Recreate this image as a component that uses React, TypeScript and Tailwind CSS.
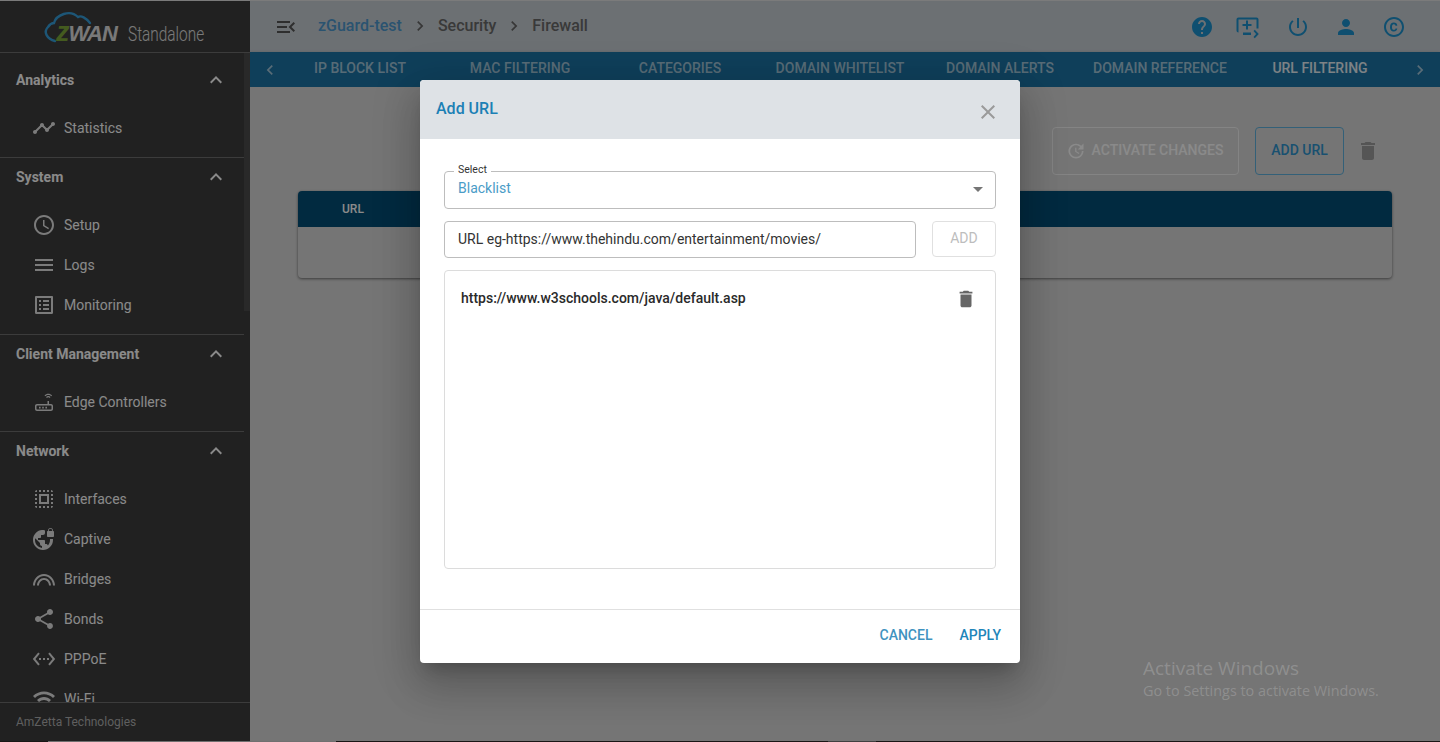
import React from 'react';

// material style icon paths, all on a 24 box
const P = {
  timeline: "M23 8c0 1.1-.9 2-2 2-.18 0-.35-.02-.51-.07l-3.56 3.55c.05.16.07.34.07.52 0 1.1-.9 2-2 2s-2-.9-2-2c0-.18.02-.36.07-.52l-2.55-2.55c-.16.05-.34.07-.52.07s-.36-.02-.52-.07l-4.55 4.56c.05.16.07.33.07.51 0 1.1-.9 2-2 2s-2-.9-2-2 .9-2 2-2c.18 0 .35.02.51.07l4.56-4.55C8.02 9.36 8 9.18 8 9c0-1.1.9-2 2-2s2 .9 2 2c0 .18-.02.36-.07.52l2.55 2.55c.16-.05.34-.07.52-.07s.36.02.52.07l3.55-3.56C19.02 8.35 19 8.18 19 8c0-1.1.9-2 2-2s2 .9 2 2z",
  clock: "M11.99 2C6.47 2 2 6.48 2 12s4.47 10 9.99 10C17.52 22 22 17.52 22 12S17.52 2 11.99 2zM12 20c-4.42 0-8-3.58-8-8s3.58-8 8-8 8 3.58 8 8-3.58 8-8 8zm.5-13H11v6l5.25 3.15.75-1.23-4.5-2.67z",
  menu: "M3 18h18v-2H3v2zm0-5h18v-2H3v2zm0-7v2h18V6H3z",
  listAlt: "M19 5v14H5V5h14m1.1-2H3.9c-.5 0-.9.4-.9.9v16.2c0 .4.4.9.9.9h16.2c.4 0 .9-.5.9-.9V3.9c0-.5-.5-.9-.9-.9zM11 7h6v2h-6V7zm0 4h6v2h-6v-2zm0 4h6v2h-6zM7 7h2v2H7zm0 4h2v2H7zm0 4h2v2H7z",
  selectAll: "M3 5h2V3c-1.1 0-2 .9-2 2zm0 8h2v-2H3v2zm4 8h2v-2H7v2zM3 9h2V7H3v2zm10-6h-2v2h2V3zm6 0v2h2c0-1.1-.9-2-2-2zM5 21v-2H3c0 1.1.9 2 2 2zm-2-4h2v-2H3v2zM9 3H7v2h2V3zm2 18h2v-2h-2v2zm8-8h2v-2h-2v2zm0 8c1.1 0 2-.9 2-2h-2v2zm0-12h2V7h-2v2zm0 8h2v-2h-2v2zm-4 4h2v-2h-2v2zm0-16h2V3h-2v2zM7 17h10V7H7v10zm2-8h6v6H9V9z",
  vpnLock: "M21 4v-.5C21 2.12 19.88 1 18.5 1S16 2.12 16 3.5V4c-.55 0-1 .45-1 1v4c0 .55.45 1 1 1h5c.55 0 1-.45 1-1V5c0-.55-.45-1-1-1zm-.8 0h-3.4v-.5c0-.94.76-1.7 1.7-1.7s1.7.76 1.7 1.7V4zm-2.28 8c.04.33.08.66.08 1 0 2.08-.8 3.97-2.1 5.39-.26-.81-1-1.39-1.9-1.39h-1v-3c0-.55-.45-1-1-1H6v-2h2c.55 0 1-.45 1-1V8h2c1.1 0 2-.9 2-2V3.46c-.95-.3-1.95-.46-3-.46C5.48 3 1 7.48 1 13s4.48 10 10 10 10-4.48 10-10c0-.34-.02-.67-.05-1h-2.03zM10 20.93c-3.95-.49-7-3.85-7-7.93 0-.62.08-1.21.21-1.79L8 16v1c0 1.1.9 2 2 2v1.93z",
  share: "M18 16.08c-.76 0-1.44.3-1.96.77L8.91 12.7c.05-.23.09-.46.09-.7s-.04-.47-.09-.7l7.05-4.11c.54.5 1.25.81 2.04.81 1.66 0 3-1.34 3-3s-1.34-3-3-3-3 1.34-3 3c0 .24.04.47.09.7L8.04 9.81C7.5 9.31 6.79 9 6 9c-1.66 0-3 1.34-3 3s1.34 3 3 3c.79 0 1.5-.31 2.04-.81l7.12 4.16c-.05.21-.08.43-.08.65 0 1.61 1.31 2.92 2.92 2.92 1.61 0 2.92-1.31 2.92-2.92s-1.31-2.92-2.92-2.92z",
  ethernet: "M7.77 6.76L6.23 5.48.82 12l5.41 6.52 1.54-1.28L3.42 12l4.35-5.24zM7 13h2v-2H7v2zm10-2h-2v2h2v-2zm-6 2h2v-2h-2v2zm6.77-7.52l-1.54 1.28L20.58 12l-4.35 5.24 1.54 1.28L23.18 12l-5.41-6.52z",
  wifi: "M1 9l2 2c4.97-4.97 13.03-4.97 18 0l2-2C16.93 2.93 7.08 2.93 1 9zm8 8l3 3 3-3c-1.65-1.66-4.34-1.66-6 0zm-4-4l2 2c2.76-2.76 7.24-2.76 10 0l2-2C15.14 9.14 8.87 9.14 5 13z",
  router: "M19 14h-2v-3h-1.5v3H5c-1.1 0-2 .9-2 2v3c0 1.1.9 2 2 2h14c1.1 0 2-.9 2-2v-3c0-1.1-.9-2-2-2zm.5 5c0 .3-.2.5-.5.5H5c-.3 0-.5-.2-.5-.5v-3c0-.3.2-.5.5-.5h14c.3 0 .5.2.5.5v3zM7 16.8h1.6v1.6H7zm3.2 0h1.6v1.6h-1.6zm3.2 0H15v1.6h-1.6zM12.5 5.4l.8.8c.9-.9 2-1.3 3-1.3s2.2.4 3 1.3l.8-.8C19 4.3 17.6 3.7 16.3 3.7s-2.7.6-3.8 1.7zm1.6 1.7l.8.8c.4-.4.9-.6 1.4-.6s1 .2 1.4.6l.8-.8c-.6-.6-1.4-1-2.2-1s-1.6.4-2.2 1z",
  bridge: "M1 18.5C1 12.4 5.9 7 12 7s11 5.4 11 11.5h-2C21 13.5 17 9 12 9S3 13.5 3 18.5H1zm4 0C5 14.6 8.1 11 12 11s7 3.6 7 7.5h-2c0-2.8-2.2-5.5-5-5.5s-5 2.7-5 5.5H5z",
  chevronUp: "M12 8l-6 6 1.41 1.41L12 10.83l4.59 4.58L18 14z",
  chevronLeft: "M15.41 7.41L14 6l-6 6 6 6 1.41-1.41L10.83 12z",
  chevronRight: "M10 6L8.59 7.41 13.17 12l-4.58 4.59L10 18l6-6z",
  menuOpen: "M3 18h13v-2H3v2zm0-5h10v-2H3v2zm0-7v2h13V6H3zm18 9.59L17.42 12 21 8.41 19.59 7l-5 5 5 5L21 15.59z",
  help: "M12 2C6.48 2 2 6.48 2 12s4.48 10 10 10 10-4.48 10-10S17.52 2 12 2zm1 17h-2v-2h2v2zm2.07-7.75l-.9.92C13.45 12.9 13 13.5 13 15h-2v-.5c0-1.1.45-2.1 1.17-2.83l1.24-1.26c.37-.36.59-.86.59-1.41 0-1.1-.9-2-2-2s-2 .9-2 2H8c0-2.21 1.79-4 4-4s4 1.79 4 4c0 .88-.36 1.68-.93 2.25z",
  queue: "M20.5 2.5h-18C1.4 2.5.5 3.4.5 4.5v11c0 1.1.9 2 2 2H7V20h8v-2.5H2.5v-13h18v9h2v-9c0-1.1-.9-2-2-2zM15.5 9v2H12v3.5h-2V11H6.5V9H10V5.5h2V9h3.5zM18.8 14.8l-1.3 1.3 2.6 2.9-2.6 2.9 1.3 1.3 4-4.2z",
  power: "M13 3h-2v10h2V3zm4.83 2.17l-1.42 1.42C17.99 7.86 19 9.81 19 12c0 3.87-3.13 7-7 7s-7-3.13-7-7c0-2.19 1.01-4.14 2.58-5.42L6.17 5.17C4.23 6.82 3 9.26 3 12c0 4.97 4.03 9 9 9s9-4.03 9-9c0-2.74-1.23-5.18-3.17-6.83z",
  person: "M12 12c2.21 0 4-1.79 4-4s-1.79-4-4-4-4 1.79-4 4 1.79 4 4 4zm0 2c-2.67 0-8 1.34-8 4v2h16v-2c0-2.66-5.33-4-8-4z",
  copyright: "M11.88 9.14c1.28.06 1.61 1.15 1.63 1.66h1.79c-.08-1.98-1.49-3.19-3.45-3.19C9.64 7.61 8 9 8 12.14c0 1.94.93 4.24 3.84 4.24 2.22 0 3.41-1.65 3.44-2.95h-1.79c-.03.59-.45 1.38-1.63 1.44-1.32-.04-1.86-1.07-1.86-2.73 0-2.87 1.27-2.98 1.88-3zM12 2C6.48 2 2 6.48 2 12s4.48 10 10 10 10-4.48 10-10S17.52 2 12 2zm0 18c-4.41 0-8-3.59-8-8s3.59-8 8-8 8 3.59 8 8-3.59 8-8 8z",
  trash: "M6 19c0 1.1.9 2 2 2h8c1.1 0 2-.9 2-2V7H6v12zM19 4h-3.5l-1-1h-5l-1 1H5v2h14V4z",
  close: "M19 6.41L17.59 5 12 10.59 6.41 5 5 6.41 10.59 12 5 17.59 6.41 19 12 13.41 17.59 19 19 17.59 13.41 12z",
  update: "M21 10.12h-6.78l2.74-2.82c-2.73-2.7-7.15-2.8-9.88-.1-2.73 2.71-2.73 7.08 0 9.79s7.15 2.71 9.88 0C18.32 15.65 19 14.08 19 12.1h2c0 1.98-.88 4.55-2.64 6.29-3.51 3.48-9.21 3.48-12.72 0-3.5-3.47-3.53-9.11-.02-12.58s9.14-3.47 12.65 0L21 3v7.12zM12.5 8v4.25l3.5 2.08-.72 1.21L11 13V8h1.5z",
};

function Icon({ d, className }: { d: string; className?: string }) {
  return (
    <svg viewBox="0 0 24 24" fill="currentColor" className={className}>
      <path d={d} />
    </svg>
  );
}

const sections = [
  { title: 'Analytics', items: [{ label: 'Statistics', icon: P.timeline }] },
  {
    title: 'System',
    items: [
      { label: 'Setup', icon: P.clock },
      { label: 'Logs', icon: P.menu },
      { label: 'Monitoring', icon: P.listAlt },
    ],
  },
  { title: 'Client Management', items: [{ label: 'Edge Controllers', icon: P.router }] },
  {
    title: 'Network',
    items: [
      { label: 'Interfaces', icon: P.selectAll },
      { label: 'Captive', icon: P.vpnLock },
      { label: 'Bridges', icon: P.bridge },
      { label: 'Bonds', icon: P.share },
      { label: 'PPPoE', icon: P.ethernet },
      { label: 'Wi-Fi', icon: P.wifi },
    ],
  },
];

const tabs = ['IP BLOCK LIST', 'MAC FILTERING', 'CATEGORIES', 'DOMAIN WHITELIST', 'DOMAIN ALERTS', 'DOMAIN REFERENCE', 'URL FILTERING'];

function Logo() {
  return (
    <div className="relative h-[52px] shrink-0 border-b border-[#6f6f6f]">
      <svg viewBox="0 0 250 51" className="absolute left-0 top-0 h-[51px] w-[250px]" fill="none">
        <path d="M55 40C47 38 43 31 48 26C50 23 52 22 54 22C56 14 70 8 78 16C81 14 86 17 90 22" stroke="#36a0dc" strokeWidth="2.4" strokeLinecap="round" />
      </svg>
      <div className="absolute left-[56px] top-[16px] whitespace-nowrap font-['Liberation_Sans',sans-serif] text-[22px] leading-[30px] font-bold italic tracking-[-1px] text-[#e0e0e0]">
        <span className="text-[27px] text-[#7fa83a]">z</span>WAN
      </div>
      <div className="absolute left-[128px] top-[20px] origin-left scale-x-[.77] whitespace-nowrap text-[20px] leading-[26px] font-light text-[#e0e0e0]">
        Standalone
      </div>
    </div>
  );
}

function Sidebar() {
  return (
    <aside className="flex h-full w-[250px] shrink-0 flex-col bg-[#3d3d3d] text-white">
      <Logo />
      <div className="relative min-h-0 flex-1 overflow-hidden">
        <div className="absolute right-0 top-0 h-[258px] w-[6px] bg-[#4c4c4c]" />
        {sections.map((s, i) => (
          <div key={s.title} className={`mr-[6px] pb-[9px] ${i === 0 ? 'pt-[8px]' : ''} border-b border-[#6f6f6f]`}>
            <div className="flex h-[38px] items-center justify-between pl-[16px] pr-[16px] text-[14px] font-bold">
              <span>{s.title}</span>
              <Icon d={P.chevronUp} className="h-[24px] w-[24px]" />
            </div>
            <div className="pt-[9px]">
              {s.items.map((it) => (
                <div key={it.label} className="flex h-[40px] items-center pl-[32px] text-[14px]">
                  <Icon d={it.icon} className="mr-[8px] h-[24px] w-[24px] text-[#e4e4e4]" />
                  <span>{it.label}</span>
                </div>
              ))}
            </div>
          </div>
        ))}
      </div>
      <div className="flex h-[39px] shrink-0 items-center border-t border-[#6f6f6f] bg-[#3d3d3d] pl-[16px] text-[12px] text-[#b0b0b0]">
        AmZetta Technologies
      </div>
    </aside>
  );
}

function TopBar() {
  return (
    <header className="flex h-[51px] shrink-0 items-center bg-[#c8cfd5] pl-[24px] pr-[34px]">
      <Icon d={P.menuOpen} className="h-[24px] w-[24px] text-[#555]" />
      <nav className="ml-[20px] flex items-center pb-[2px] text-[16px] font-medium text-[#6a6a6a]">
        <span className="text-[#4f9ad0]">zGuard-test</span>
        <Icon d={P.chevronRight} className="mx-[8px] h-[20px] w-[20px] text-[#666]" />
        <span>Security</span>
        <Icon d={P.chevronRight} className="mx-[8px] h-[20px] w-[20px] text-[#666]" />
        <span>Firewall</span>
      </nav>
      <div className="ml-auto flex items-center text-[#1c93cf]">
        <Icon d={P.help} className="h-[24px] w-[24px]" />
        <Icon d={P.queue} className="ml-[22px] h-[24px] w-[24px]" />
        <Icon d={P.power} className="ml-[26px] h-[24px] w-[24px]" />
        <Icon d={P.person} className="ml-[24px] h-[24px] w-[24px]" />
        <Icon d={P.copyright} className="ml-[24px] h-[24px] w-[24px]" />
      </div>
    </header>
  );
}

function TabBar() {
  return (
    <div className="flex h-[35px] shrink-0 items-center bg-[#1c75a7] text-[14px] font-medium text-white/60 shadow-[0_2px_4px_rgba(0,0,0,0.4)]">
      <div className="w-[30px] pl-[10px]">
        <Icon d={P.chevronLeft} className="h-[20px] w-[20px]" />
      </div>
      {tabs.map((t, i) => (
        <div key={t} className={`w-[160px] pb-[2px] text-center whitespace-nowrap ${i === 6 ? 'text-white/90' : ''}`}>
          {t}
        </div>
      ))}
      <div className="flex w-[40px] justify-center">
        <Icon d={P.chevronRight} className="h-[20px] w-[20px]" />
      </div>
    </div>
  );
}

function Content() {
  return (
    <div className="flex-1 bg-[#d9d9d9] px-[48px] pt-[40px]">
      <div className="flex items-center justify-end">
        <div className="flex h-[48px] w-[187px] items-center justify-center rounded border border-[#f4f4f4] pr-[2px] text-[14px] font-medium text-white">
          <Icon d={P.update} className="mr-[6px] h-[20px] w-[20px]" />
          <span className="pb-[2px]">ACTIVATE CHANGES</span>
        </div>
        <div className="ml-[16px] flex h-[48px] w-[89px] items-center justify-center rounded border border-[#5fb2de] pb-[2px] text-[14px] font-medium text-[#2f95cf]">
          ADD URL
        </div>
        <div className="mx-[12px] w-[24px] text-[#9e9e9e]">
          <Icon d={P.trash} className="h-[24px] w-[24px]" />
        </div>
      </div>
      <div className="mt-[16px] h-[87px] rounded bg-[#d9d9d9] shadow-[0_1px_3px_rgba(0,0,0,0.5)]">
        <div className="flex h-[36px] items-center rounded-t bg-[#024e77] pl-[44px] text-[12px] font-medium text-white">
          URL
        </div>
      </div>
    </div>
  );
}

function Modal() {
  return (
    <div className="flex h-[583px] w-[600px] flex-col overflow-hidden rounded bg-white shadow-[0_11px_15px_-7px_rgba(0,0,0,0.2),0_24px_38px_3px_rgba(0,0,0,0.14),0_9px_46px_8px_rgba(0,0,0,0.12)]">
      <div className="flex h-[59px] shrink-0 bg-[#dee2e6] pl-[16px] pr-[20px]">
        <h2 className="pt-[19px] text-[16px] leading-[20px] font-medium text-[#1b80b5]">Add URL</h2>
        <Icon d={P.close} className="ml-auto mt-[20px] h-[24px] w-[24px] text-[#9a9a9a]" />
      </div>
      <div className="flex-1 px-[24px] pt-[32px]">
        <div className="relative flex h-[38px] items-center justify-between rounded border border-[#bdbdbd] pl-[13px] pr-[12px] text-[14px] text-[#4a9cc7]">
          <span className="absolute -top-[8px] left-[9px] bg-white px-[4px] text-[10.5px] leading-[12px] text-[#333]">Select</span>
          <span className="-mt-[2px]">Blacklist</span>
          <span className="h-0 w-0 border-x-[5px] border-t-[5px] border-x-transparent border-t-[#757575]" />
        </div>
        <div className="mt-[12px] flex gap-[16px]">
          <div className="flex h-[37px] w-[472px] items-center rounded border border-[#bdbdbd] pl-[13px] text-[14px] text-[#333]">
            URL eg-https://www.thehindu.com/entertainment/movies/
          </div>
          <div className="flex h-[36px] w-[64px] items-center justify-center rounded border border-[#e0e0e0] text-[14px] text-[#bdbdbd]">
            ADD
          </div>
        </div>
        <div className="mt-[12px] flex h-[299px] items-start justify-between rounded border border-[#dcdcdc] pl-[16px] pr-[18px] pt-[15px]">
          <span className="text-[14px] leading-[24px] font-medium text-[#2a2a2a]">https://www.w3schools.com/java/default.asp</span>
          <Icon d={P.trash} className="mt-[2px] h-[22px] w-[22px] text-[#666]" />
        </div>
      </div>
      <div className="flex h-[54px] shrink-0 items-center justify-end gap-[27px] border-t border-[#e0e0e0] pb-[2px] pr-[19px] text-[14px] font-medium text-[#3f93bf]">
        <span>CANCEL</span>
        <span className="text-[#1f86ba]">APPLY</span>
      </div>
    </div>
  );
}

export default function App() {
  return (
    <div className="relative flex h-[742px] w-[1440px] flex-col overflow-hidden bg-[#222] font-['Roboto',sans-serif]">
      <div className="h-[1px] shrink-0 bg-[#e4e4e4]" />
      <div className="flex min-h-0 flex-1">
        <Sidebar />
        <main className="flex min-w-0 flex-1 flex-col">
          <TopBar />
          <TabBar />
          <Content />
        </main>
      </div>
      <div className="flex h-[1px] shrink-0 bg-[#2f2a28]">
        <div className="ml-[48px] w-[288px] bg-[#cfcfcf]" />
        <div className="ml-[492px] w-[48px] bg-[#777]" />
      </div>
      {/* backdrop + dialog */}
      <div className="absolute inset-0 flex items-center justify-center bg-black/46">
        <Modal />
      </div>
      {/* windows watermark */}
      <div className="absolute left-[1143px] top-[656px] font-['Open_Sans',sans-serif] text-white/20">
        <div className="text-[19px] leading-[25px]">Activate Windows</div>
        <div className="text-[14.4px] leading-[19px]">Go to Settings to activate Windows.</div>
      </div>
    </div>
  );
}
